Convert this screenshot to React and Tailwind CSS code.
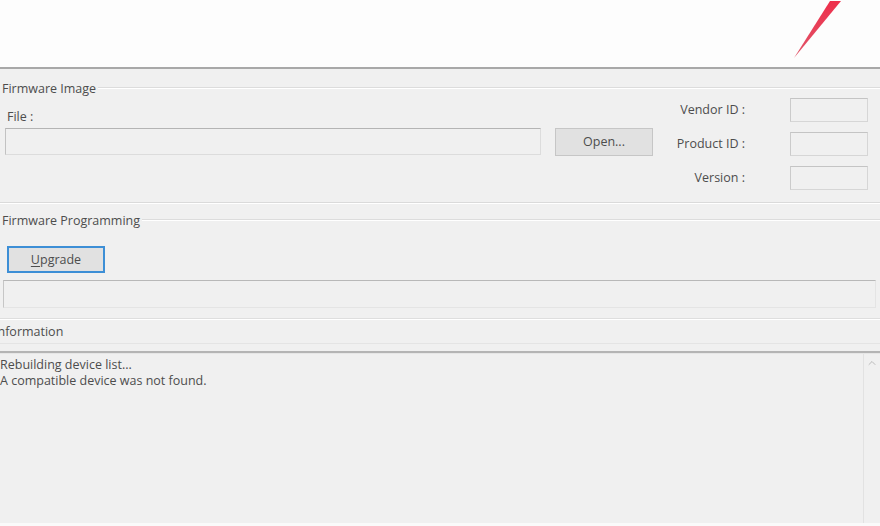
import { ChevronUp } from 'lucide-react';

/**
 * Legend - group box caption with the etched line running to the right
 */
function Legend({ children, className = '' }) {
  return (
    <div className={`flex items-center h-[19px] ${className}`}>
      <span className="pl-[2px] pr-[2px] whitespace-nowrap">{children}</span>
      <div className="flex-1 border-t border-[#dcdcdc] border-b border-b-white mt-[-1px]" />
    </div>
  );
}

/**
 * IdField - right aligned label with a small sunken box
 */
function IdField({ label }) {
  return (
    <div className="flex items-center h-[24px]">
      <span className="w-[85px] text-right whitespace-nowrap">{label}</span>
      <div className="ml-[45px] w-[78px] h-[24px] border border-[#d6d6d6] border-t-[#c4c4c4] border-l-[#cbcbcb] bg-[#f0f0f0]" />
    </div>
  );
}

export default function App() {
  return (
    <div
      className="w-[880px] h-[526px] overflow-hidden bg-[#f0f0f0] flex flex-col text-[12.5px] text-[#4d4d4d] leading-[18px]"
      style={{ fontFamily: '"Open Sans", "Noto Sans", Arial, sans-serif' }}
    >
      {/* White header strip with the red pointer */}
      <div className="relative h-[67px] bg-[#fdfdfd] shrink-0">
        <svg className="absolute left-0 top-0" width="880" height="67" viewBox="0 0 880 67">
          <defs>
            <linearGradient id="ptr" x1="0" y1="0" x2="0" y2="1">
              <stop offset="0" stopColor="#ee2f4b" />
              <stop offset="1" stopColor="#e0566a" />
            </linearGradient>
          </defs>
          <polygon points="830,1 841,1 794,58" fill="url(#ptr)" />
        </svg>
      </div>
      <div className="h-[2px] bg-[#a8a8a8] shrink-0" />

      {/* Firmware Image */}
      <div className="pt-[10px] pb-[12px] border-b border-[#dadada] shrink-0">
        <Legend>Firmware Image</Legend>
        <div className="flex">
          <div className="w-[660px] pt-[10px]">
            <div className="pl-[7px] h-[18px]">File :</div>
            <div className="flex items-start mt-[2px] pl-[5px]">
              <div className="w-[536px] h-[27px] border border-[#dcdcdc] border-t-[#b4b4b4] border-l-[#c2c2c2] bg-[#f0f0f0]" />
              <button className="ml-[14px] w-[98px] h-[28px] bg-[#e1e1e1] border border-[#c6c6c6] text-[#4d4d4d]">
                Open...
              </button>
            </div>
          </div>
          <div className="flex flex-col gap-[10px]">
            <IdField label="Vendor ID :" />
            <IdField label="Product ID :" />
            <IdField label="Version :" />
          </div>
        </div>
      </div>

      {/* Firmware Programming */}
      <div className="pt-[7px] border-t border-white shrink-0">
        <Legend>Firmware Programming</Legend>
        <div className="pl-[7px] pt-[16px]">
          <button className="w-[98px] h-[27px] bg-[#e1e1e1] border-2 border-[#3d8fd6] text-[#4d4d4d]">
            <span className="underline underline-offset-2">U</span>pgrade
          </button>
        </div>
        <div className="ml-[3px] mr-[4px] mt-[7px] h-[28px] border border-[#e4e4e4] border-t-[#b8b8b8] border-l-[#c6c6c6] bg-[#f0f0f0]" />
        <div className="mt-[10px] border-t border-[#dedede] border-b border-b-white" />
      </div>

      {/* Information */}
      <div className="flex-1 flex flex-col min-h-0">
        <div className="flex items-center h-[24px] border-b border-[#e4e4e4]">
          <span className="ml-[-6px] whitespace-nowrap">Information</span>
        </div>
        <div className="mt-[7px] h-[2px] bg-[#b4b4b4]" />
        <div className="flex-1 flex min-h-0 border-t border-[#e6e6e6] border-b-[3px] border-b-[#fafafa]">
          <div className="flex-1 pt-[3px] leading-[16px]">
            <div>Rebuilding device list...</div>
            <div>A compatible device was not found.</div>
          </div>
          <div className="w-[17px] border-l border-[#e2e2e2] flex flex-col items-center pt-[3px]">
            <ChevronUp size={12} strokeWidth={1.5} className="text-[#a8a8a8]" />
          </div>
        </div>
      </div>
    </div>
  );
}
